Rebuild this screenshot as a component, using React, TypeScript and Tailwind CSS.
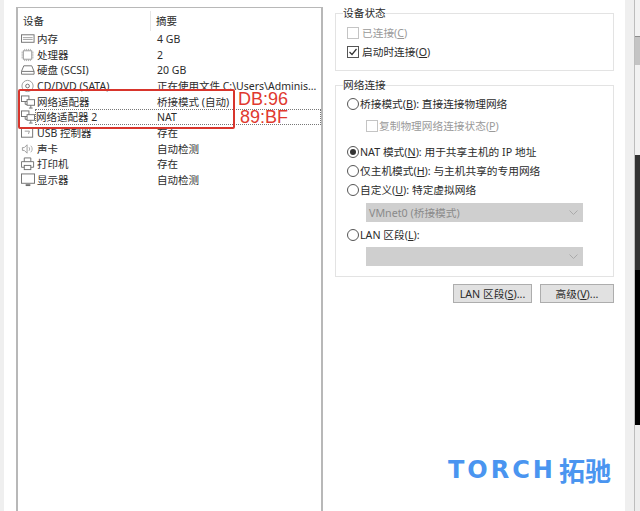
const font = { fontFamily: '"Noto Sans", "Noto Sans CJK SC", sans-serif' }

const iconProps = {
  width: 14,
  height: 14,
  viewBox: "0 0 15 14",
  fill: "none",
  stroke: "#6f6f6f",
  strokeWidth: 1,
  className: "shrink-0",
}

const MemoryIcon = () => (
  <svg {...iconProps}>
    <rect x="0.5" y="2.5" width="13.500" height="8" />
    <path d="M2 5.500h10.500M2 7.500h10.500" stroke="#a0a0a0" />
  </svg>
)

const CpuIcon = () => (
  <svg {...iconProps}>
    <rect x="2.5" y="2.5" width="9" height="9" stroke="#999" />
    <path d="M4 0.5v2M6 0.5v2M8 0.5v2M10 0.5v2M4 11.5v2M6 11.5v2M8 11.5v2M10 11.5v2M0.5 4h2M0.5 6h2M0.5 8h2M0.5 10h2M11.5 4h2M11.5 6h2M11.5 8h2M11.5 10h2" stroke="#aaa" />
  </svg>
)

const DiskIcon = () => (
  <svg {...iconProps}>
    <path d="M0.5 8.5L3 2.5h8.500l2.500 6v3h-13.500zM0.500 8.500h13.500" />
  </svg>
)

const CdIcon = () => (
  <svg {...iconProps}>
    <circle cx="7" cy="7" r="6" stroke="#999" />
    <circle cx="7" cy="7" r="2" />
  </svg>
)

const NetIcon = () => (
  <svg {...iconProps}>
    <rect x="0.5" y="0.5" width="8" height="6" />
    <path d="M4.500 6.500v3h2" />
    <rect x="6.500" y="4.500" width="8" height="6" fill="#fff" />
    <path d="M10.500 10.500v3M8.500 13.500h4" />
  </svg>
)

const UsbIcon = () => (
  <svg {...iconProps}>
    <rect x="0.500" y="1.500" width="12" height="10" />
    <path d="M4 5h5l-1 3" stroke="#999" />
  </svg>
)

const SoundIcon = () => (
  <svg {...iconProps}>
    <path d="M1.500 5.500h2l3-3v9l-3-3h-2z" stroke="#999" />
    <path d="M8.500 5c1 1 1 3 0 4M10.500 3.500c2 2 2 5 0 7" stroke="#aaa" />
  </svg>
)

const PrinterIcon = () => (
  <svg {...iconProps}>
    <path d="M3.500 4.500v-4h7v4M3.500 10.500h-3v-6h13v6h-3" />
    <rect x="3.500" y="8.500" width="7" height="4.500" />
  </svg>
)

const DisplayIcon = () => (
  <svg {...iconProps}>
    <rect x="0.500" y="0.500" width="14" height="10" />
    <path d="M5 12.500h5" strokeWidth="2" />
  </svg>
)

const rows = [
  { icon: <MemoryIcon />, name: "内存", summary: "4 GB" },
  { icon: <CpuIcon />, name: "处理器", summary: "2" },
  { icon: <DiskIcon />, name: "硬盘 (SCSI)", summary: "20 GB" },
  { icon: <CdIcon />, name: "CD/DVD (SATA)", summary: "正在使用文件 C:\\Users\\Adminis..." },
  { icon: <NetIcon />, name: "网络适配器", summary: "桥接模式 (自动)" },
  { icon: <NetIcon />, name: "网络适配器 2", summary: "NAT", focused: true },
  { icon: <UsbIcon />, name: "USB 控制器", summary: "存在" },
  { icon: <SoundIcon />, name: "声卡", summary: "自动检测" },
  { icon: <PrinterIcon />, name: "打印机", summary: "存在" },
  { icon: <DisplayIcon />, name: "显示器", summary: "自动检测" },
]

const Radio = ({ checked }: { checked?: boolean }) => (
  <span className="w-[12px] h-[12px] rounded-full border border-[#555] bg-white flex items-center justify-center shrink-0">
    {checked && <span className="w-[6px] h-[6px] rounded-full bg-[#333]" />}
  </span>
)

const Check = ({ checked, disabled }: { checked?: boolean; disabled?: boolean }) => (
  <span className={`w-[12px] h-[12px] border flex items-center justify-center shrink-0 ${disabled ? "border-[#c4c4c4]" : "border-[#555]"}`}>
    {checked && (
      <svg width="10" height="10" viewBox="0 0 10 10" fill="none" stroke="#333" strokeWidth="1.200">
        <path d="M1.500 5l2.500 2.500 4.500-5.500" />
      </svg>
    )}
  </span>
)

const Select = ({ label }: { label?: string }) => (
  <div className="ml-[23px] w-[217px] h-[19px] bg-[#cfcfcf] flex items-center justify-between pl-[3px] pr-[5px] text-[#8a8a8a]">
    <span>{label}</span>
    <svg width="9" height="6" viewBox="0 0 9 6" fill="none" stroke="#aaa">
      <path d="M0.500 0.500l4 4 4-4" />
    </svg>
  </div>
)

export default function App() {
  return (
    <div className="relative flex w-[640px] h-[511px] overflow-hidden bg-white text-[10.7px] leading-[16px] text-[#2b2b2b]" style={font}>
      <div className="w-[4px] bg-[#efefef] shrink-0" />

      {/* device list */}
      <div className="ml-[12px] mt-[7px] w-[307px] h-[510px] border-x-2 border-t border-[#b8b8b8] shrink-0 text-[10.500px] leading-[14px]">
        <div className="flex h-[23px] pt-[3px] items-center">
          <div className="w-[133px] pl-[5px] border-r border-[#e6e6e6] h-full flex items-center">设备</div>
          <div className="pl-[5px]">摘要</div>
        </div>
        {rows.map((row) => (
          <div key={row.name} className="flex h-[15.7px] items-center">
            <div className="w-[17px] pl-[3px] shrink-0 flex items-center">{row.icon}</div>
            <div
              className={`flex-1 flex items-center h-[16px] whitespace-nowrap ${
                row.focused ? "border border-dotted border-[#777] pl-0" : "pl-[2px]"
              }`}
            >
              <span className={`shrink-0 ${row.focused ? "w-[121px]" : "w-[120px]"}`}>{row.name}</span>
              <span>{row.summary}</span>
            </div>
          </div>
        ))}
      </div>

      {/* options */}
      <div className="ml-[12px] w-[279px] shrink-0 pt-[5px]">
        <fieldset className="border border-[#e3e3e3] h-[66px] pl-[7px]">
          <legend className="leading-[16px]">设备状态</legend>
          <div className="pl-[4px] flex items-center gap-[3px] h-[19px] mt-[2px] text-[#9a9a9a]">
            <Check disabled />
            <span>已连接(<u>C</u>)</span>
          </div>
          <div className="pl-[4px] flex items-center gap-[3px] h-[19px]">
            <Check checked />
            <span>启动时连接(<u>O</u>)</span>
          </div>
        </fieldset>

        <fieldset className="mt-[6px] border border-[#e3e3e3] h-[200px] pl-[7px]">
          <legend className="leading-[16px]">网络连接</legend>
          <div className="pl-[4px] flex items-center gap-[1px] h-[19px] mt-[1px]">
            <Radio />
            <span>桥接模式(<u>B</u>): 直接连接物理网络</span>
          </div>
          <div className="pl-[23px] flex items-center gap-[1px] h-[19px] mt-[3px] text-[#9a9a9a]">
            <Check disabled />
            <span>复制物理网络连接状态(<u>P</u>)</span>
          </div>
          <div className="pl-[4px] flex items-center gap-[1px] h-[19px] mt-[7px]">
            <Radio checked />
            <span>NAT 模式(<u>N</u>): 用于共享主机的 IP 地址</span>
          </div>
          <div className="pl-[4px] flex items-center gap-[1px] h-[19px]">
            <Radio />
            <span>仅主机模式(<u>H</u>): 与主机共享的专用网络</span>
          </div>
          <div className="pl-[4px] flex items-center gap-[1px] h-[19px]">
            <Radio />
            <span>自定义(<u>U</u>): 特定虚拟网络</span>
          </div>
          <div className="mt-[4px]">
            <Select label="VMnet0 (桥接模式)" />
          </div>
          <div className="pl-[4px] flex items-center gap-[1px] h-[19px] mt-[3px]">
            <Radio />
            <span>LAN 区段(<u>L</u>):</span>
          </div>
          <div className="mt-[3px]">
            <Select />
          </div>
        </fieldset>

        <div className="mt-[7px] flex justify-end gap-[8px]">
          <button className="w-[79px] h-[19px] bg-[#e1e1e1] border border-[#adadad] flex items-center justify-center">
            LAN 区段(<u>S</u>)...
          </button>
          <button className="w-[74px] h-[19px] bg-[#e1e1e1] border border-[#adadad] flex items-center justify-center">
            高级(<u>V</u>)...
          </button>
        </div>
      </div>

      <div className="ml-[11px] w-[9px] bg-[#efefef] shrink-0" />

      {/* window behind, cut off at the edge */}
      <div className="w-[7px] shrink-0 flex flex-col border-l border-[#bdbdbd]">
        <div className="h-[36px] bg-[#f2f2f2]" />
        <div className="h-[29px] bg-[#c4c4c4] border-t border-[#8c8c8c]" />
        <div className="h-[90px] bg-[#f2f2f2]" />
        <div className="h-[115px] bg-[#333333]" />
        <div className="h-[155px] bg-black" />
        <div className="flex-1 bg-[#ededed]" />
      </div>

      {/* red annotation */}
      <div className="absolute left-[18px] top-[89px] w-[217px] h-[40px] border-2 border-[#d8352c] rounded-[2px]" />
      <div
        className="absolute left-[238px] top-[93px] text-[18px] leading-[13px] text-[#e0392f]"
        style={{ fontFamily: '"Liberation Sans", sans-serif' }}
      >
        <div>DB:96</div>
        <div className="mt-[5px] ml-[2px]">89:BF</div>
      </div>

      {/* watermark */}
      <div className="absolute left-[448px] top-[456px] flex items-center text-[#4a95f0] font-bold whitespace-nowrap">
        <span className="text-[24px] leading-[28px] tracking-[3px]" style={{ fontFamily: '"DejaVu Sans", sans-serif' }}>
          TORCH
        </span>
        <span className="ml-[3px] text-[26px] leading-[28px]" style={{ fontFamily: '"Noto Sans CJK SC", sans-serif' }}>
          拓驰
        </span>
      </div>
    </div>
  )
}
